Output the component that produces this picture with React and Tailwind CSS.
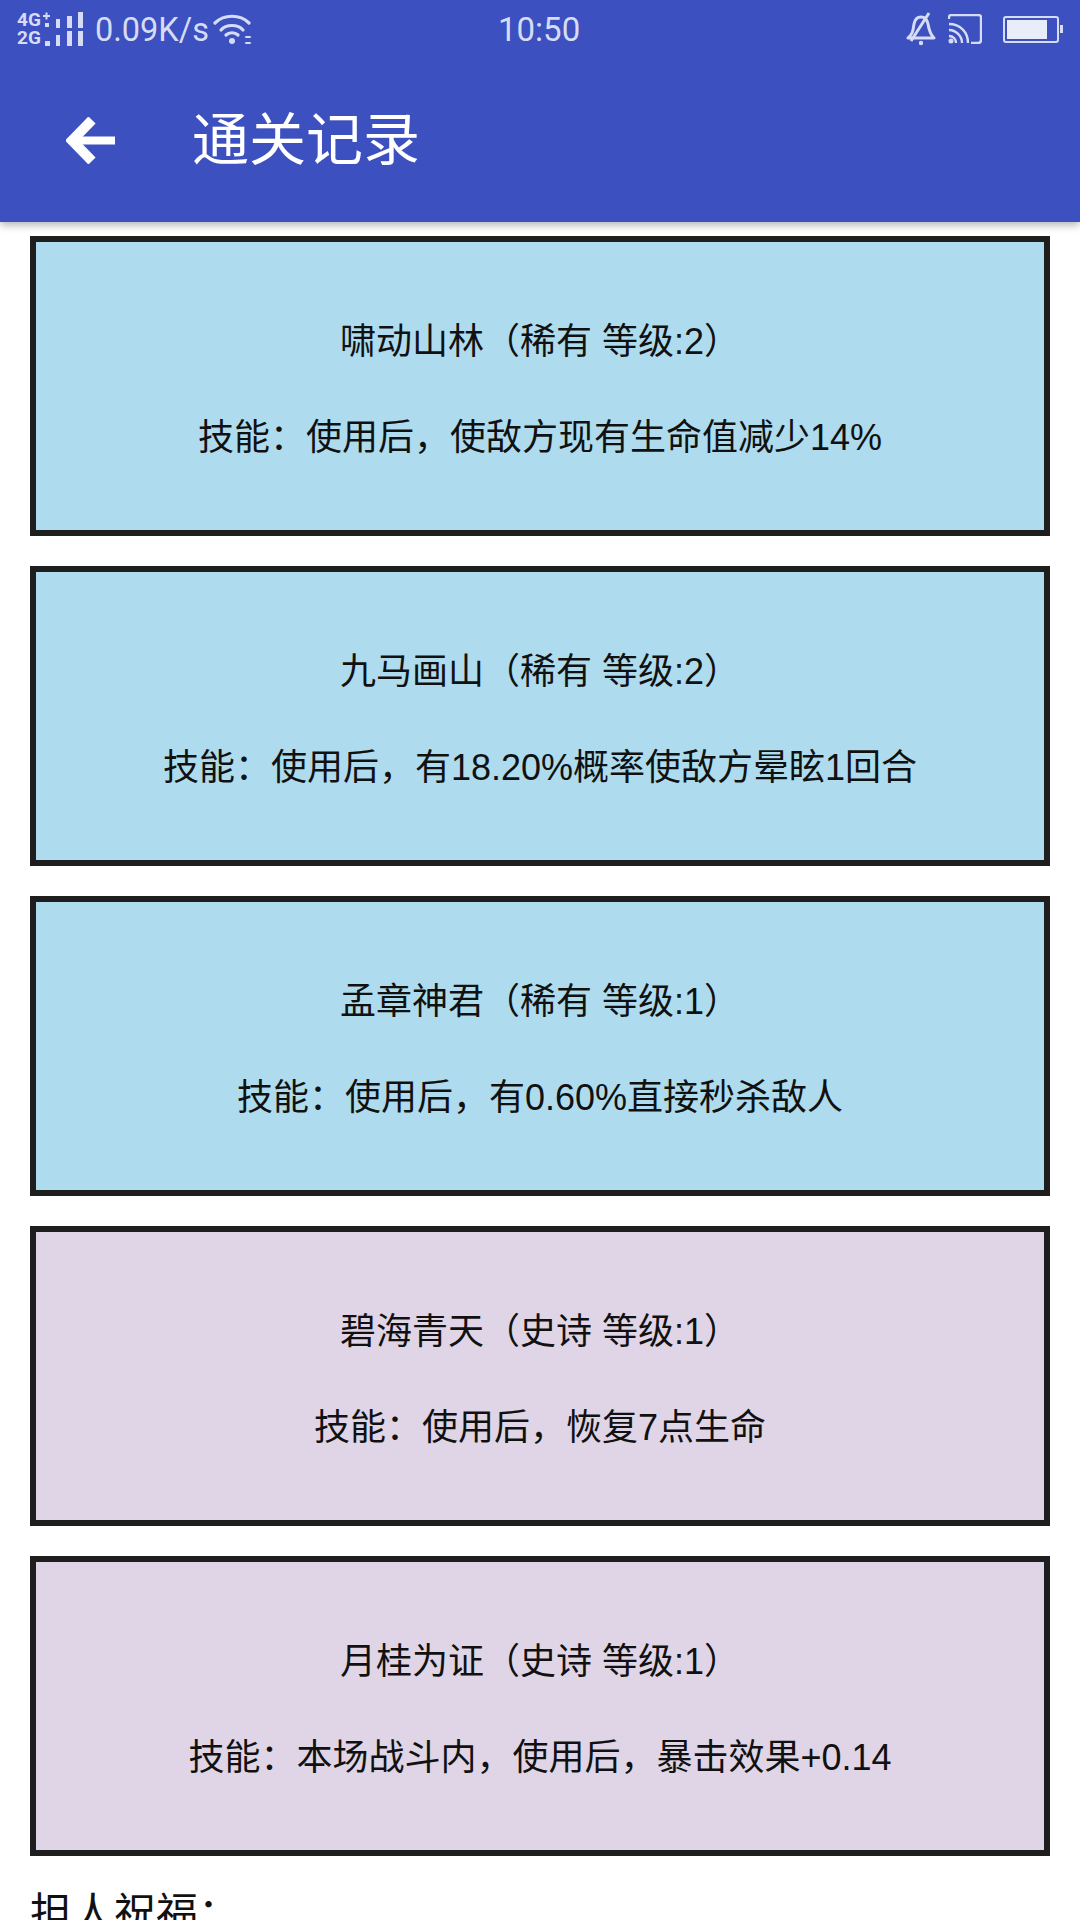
import React from 'react';

const cards = [
  { title: '啸动山林（稀有 等级:2）', skill: '技能：使用后，使敌方现有生命值减少14%', epic: false },
  { title: '九马画山（稀有 等级:2）', skill: '技能：使用后，有18.20%概率使敌方晕眩1回合', epic: false },
  { title: '孟章神君（稀有 等级:1）', skill: '技能：使用后，有0.60%直接秒杀敌人', epic: false },
  { title: '碧海青天（史诗 等级:1）', skill: '技能：使用后，恢复7点生命', epic: true },
  { title: '月桂为证（史诗 等级:1）', skill: '技能：本场战斗内，使用后，暴击效果+0.14', epic: true },
];

const SignalIcon = () => (
  <div className="flex items-center">
    <div className="flex flex-col w-[26px] text-[19px] leading-[18px] font-bold">
      <span>4G</span>
      <span>2G</span>
    </div>
    <svg width="40" height="36" viewBox="26 0 40 36" fill="#d6dcf5">
      <path d="M26 5h7M29.500 1.500v7" stroke="#d6dcf5" strokeWidth="2" />
      <rect x="28" y="12" width="4" height="4" />
      <rect x="28" y="30" width="5" height="5" />
      <rect x="39" y="8" width="4" height="9" />
      <rect x="39" y="24" width="4" height="11" />
      <rect x="50" y="5" width="5" height="12" />
      <rect x="50" y="20" width="5" height="15" />
      <rect x="61" y="1" width="5" height="16" />
      <rect x="61" y="20" width="5" height="15" />
    </svg>
  </div>
);

const WifiIcon = () => (
  <svg width="38" height="34" viewBox="0 0 38 34" fill="none" stroke="#d6dcf5" strokeWidth="3.200" strokeLinecap="round">
    <path d="M2 11C11 2 27 2 36 11" />
    <path d="M8 18C13 12 25 12 30 18" />
    <path d="M13 23C16 20 22 20 25 23" />
    <circle cx="19" cy="29" r="3" fill="#d6dcf5" stroke="none" />
    <path d="M33 25h4M33 31h4" strokeWidth="2" />
  </svg>
);

const BellOffIcon = () => (
  <svg width="30" height="34" viewBox="0 0 30 34" fill="none" stroke="#d6dcf5" strokeWidth="3" strokeLinejoin="round">
    <path d="M2 26C7 22 7 18 8 12C9 7 12 5 15 5C19 5 21 7 22 12C23 18 24 22 28 26Z" />
    <path d="M5 29L23 1" />
    <circle cx="15" cy="31" r="2.200" fill="#d6dcf5" stroke="none" />
  </svg>
);

const CastIcon = () => (
  <svg width="34" height="30" viewBox="0 0 34 30" fill="none" stroke="#d6dcf5" strokeWidth="2.400">
    <path d="M1 5V3C1 2 2 1 3 1H30C32 1 33 2 33 3V26C33 28 32 29 30 29H23" />
    <path d="M1 10C12 10 20 18 20 29" />
    <path d="M1 16C8 16 14 22 14 29" />
    <path d="M1 22C5 22 8 25 8 29" />
    <circle cx="3" cy="27" r="2.500" fill="#d6dcf5" stroke="none" />
  </svg>
);

const BatteryIcon = () => (
  <div className="flex items-center">
    <div className="w-[56px] h-[27px] rounded-[3px] border-2 border-[#d6dcf5] p-[2px]">
      <div className="h-full w-[40px] bg-[#e9ecf9]"></div>
    </div>
    <div className="ml-[1px] w-[3px] h-[8px] bg-[#d6dcf5]"></div>
  </div>
);

export default function App() {
  return (
    <div className="w-[1080px] h-[1920px] overflow-hidden bg-white font-['Liberation_Sans','Noto_Sans_CJK_SC',sans-serif] text-[#111]">
      <header className="relative z-10 h-[222px] bg-[#3c50bf] shadow-[0_3px_8px_rgba(0,0,0,0.3)] font-['Roboto','Noto_Sans_CJK_SC',sans-serif]">
        <div className="relative flex items-center h-[58px] pl-[17px] pr-[17px] text-[33px] text-[#d6dcf5]">
          <SignalIcon />
          <span className="ml-[12px] text-[32.5px] relative top-[1px]">0.09K/s</span>
          <span className="ml-[4px]"><WifiIcon /></span>
          <span className="absolute left-[498px] top-[5px]">10:50</span>
          <div className="ml-auto flex items-center">
            <BellOffIcon />
            <span className="ml-[12px]"><CastIcon /></span>
            <span className="ml-[21px]"><BatteryIcon /></span>
          </div>
        </div>
        <div className="flex items-center h-[164px] pl-[66px] text-white">
          <svg width="50" height="47" viewBox="0 0 50 47" fill="none" stroke="#fff" strokeWidth="8">
            <path d="M49 23.500H8" />
            <path d="M26 3L6 23.500L26 44" strokeWidth="10" />
          </svg>
          <h1 className="ml-[76px] text-[57px] leading-none font-normal">通关记录</h1>
        </div>
      </header>

      <main className="flex flex-col gap-[30px] px-[30px] pt-[14px]">
        {cards.map((card) => (
          <div
            key={card.title}
            className={`h-[300px] border-[6px] border-[#1e1e1e] flex flex-col items-center justify-center gap-[48px] pt-[7px] text-[36px] leading-[48px] ${
              card.epic ? 'bg-[#e0d5e6]' : 'bg-[#aedcee]'
            }`}
          >
            <p>{card.title}</p>
            <p>{card.skill}</p>
          </div>
        ))}
      </main>

      <p className="mt-[30px] pl-[30px] text-[42px] leading-[56px]">担人祝福：</p>
    </div>
  );
}
